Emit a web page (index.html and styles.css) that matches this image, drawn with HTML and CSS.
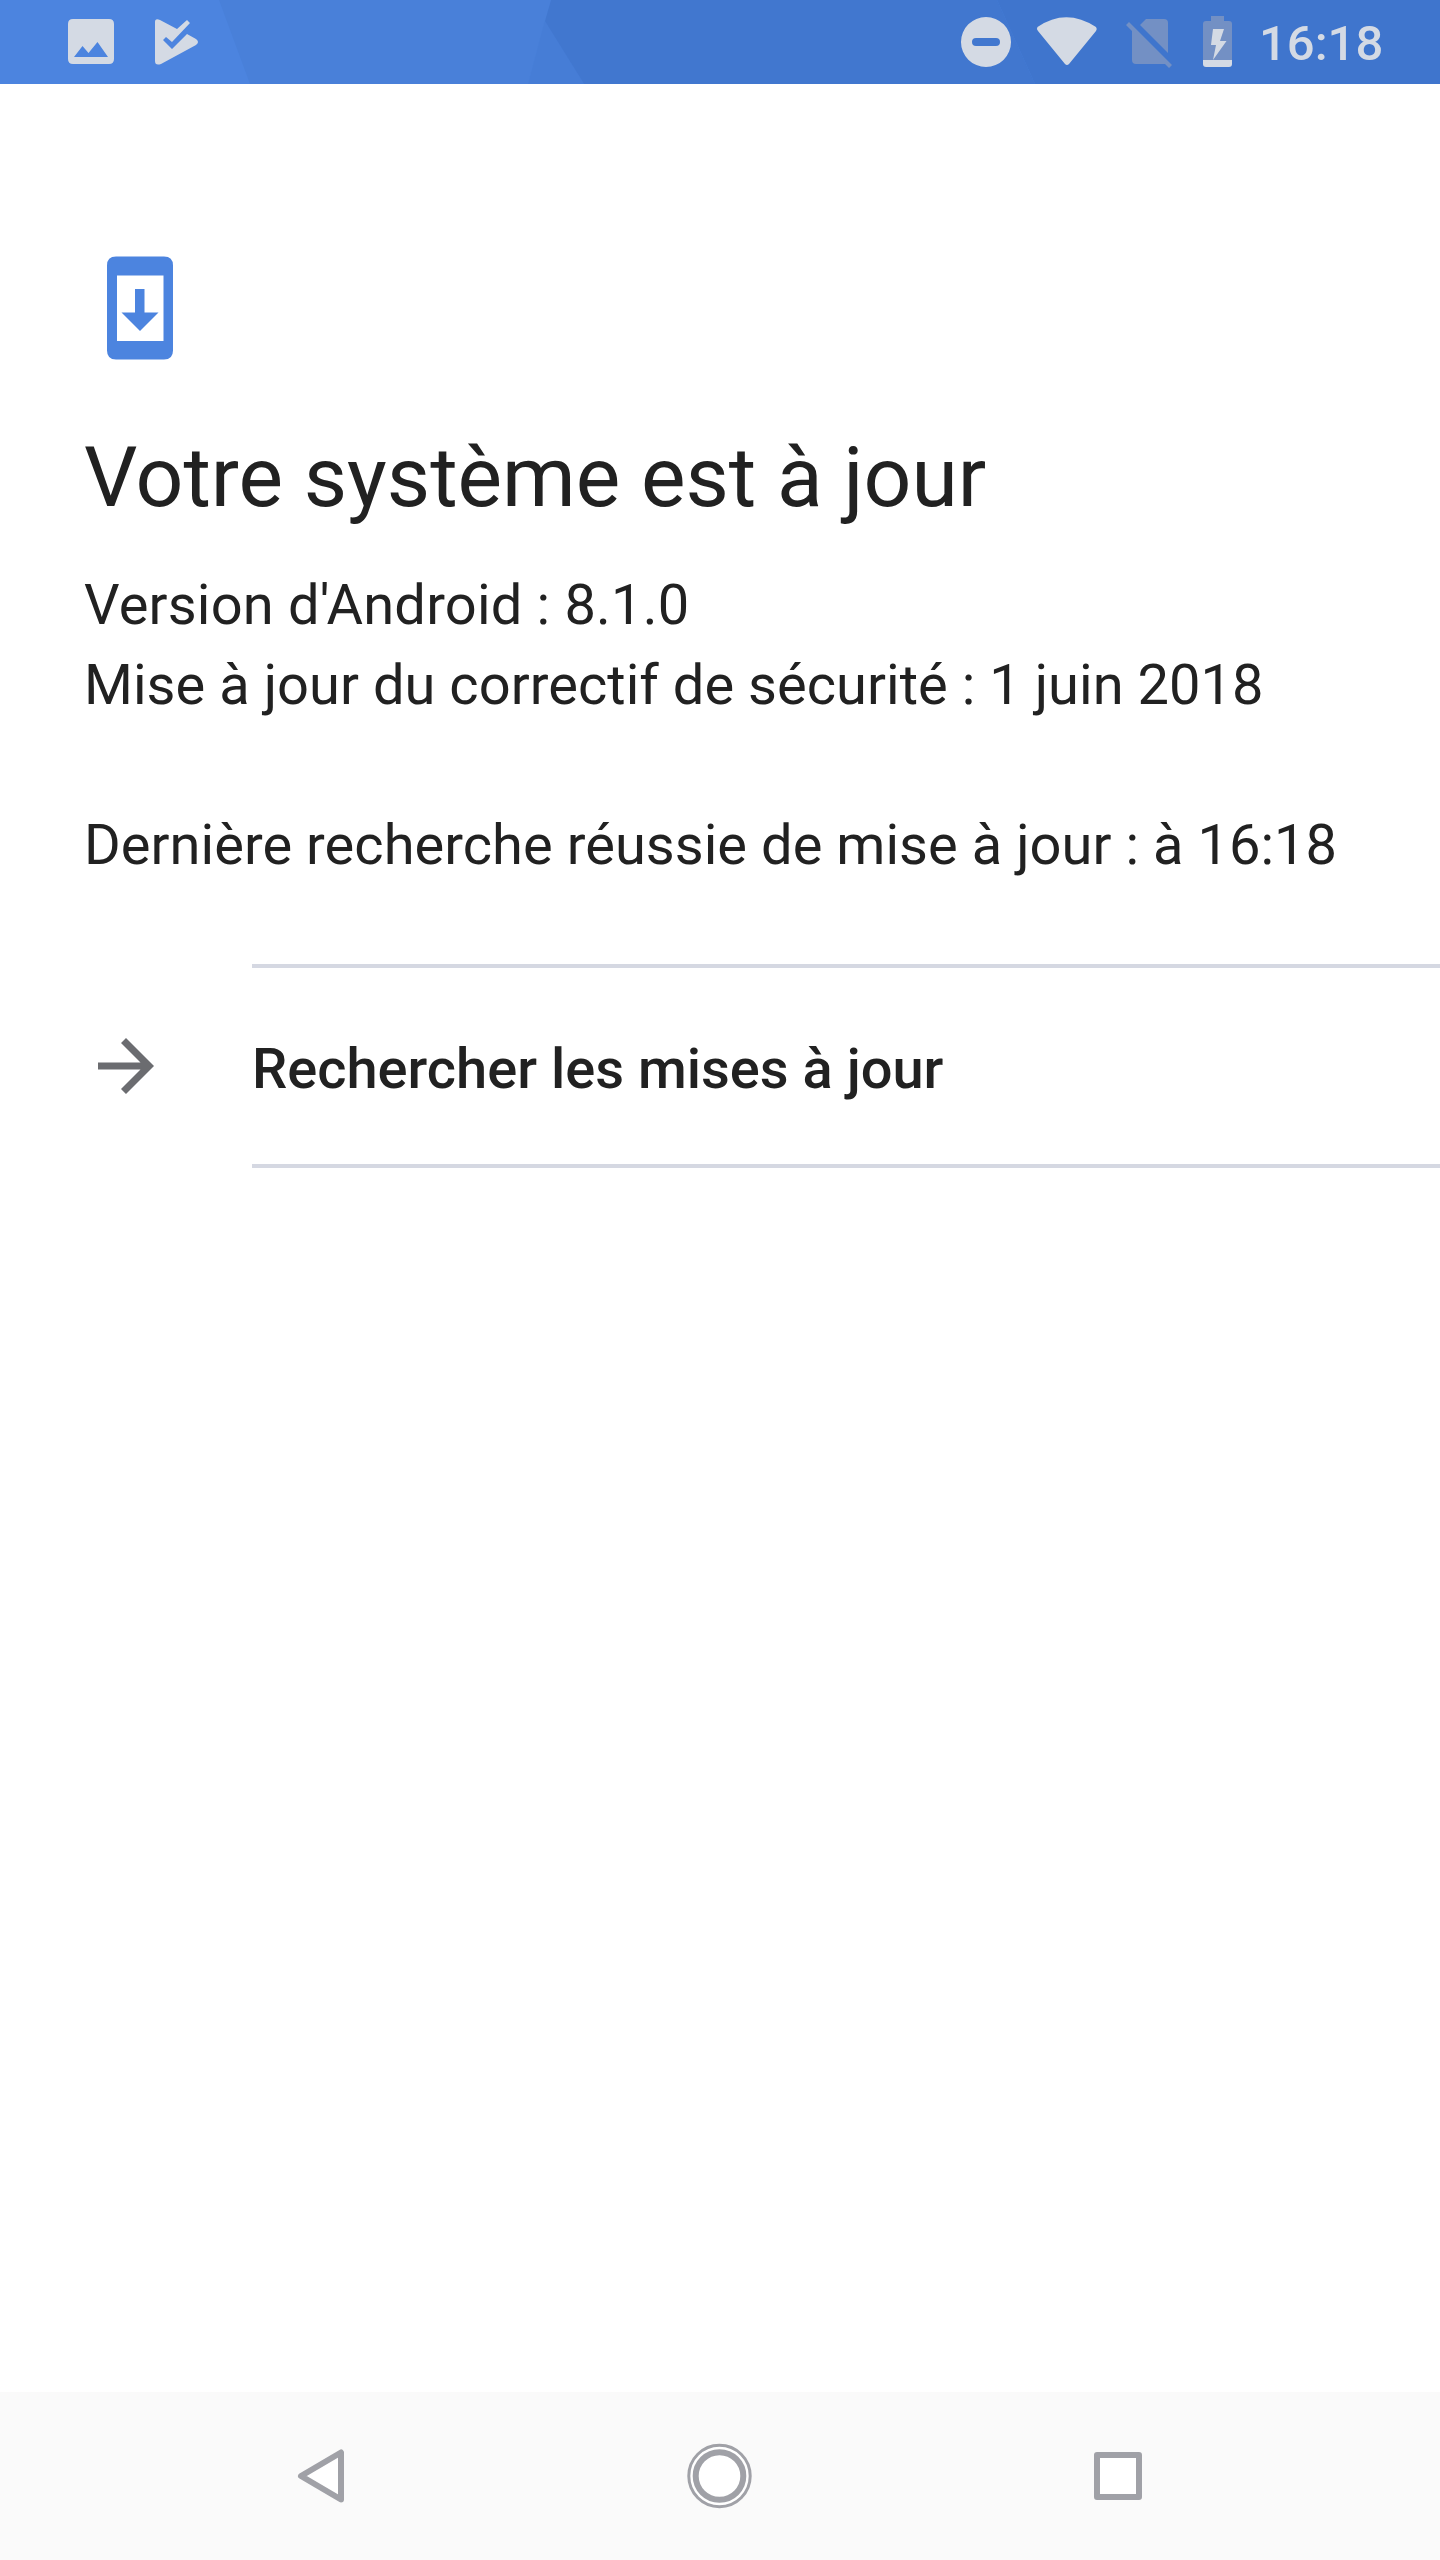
FILE: index.html
```html
<!DOCTYPE html>
<html lang="fr">
<head>
<meta charset="utf-8">
<title>Mise à jour du système</title>
<link rel="stylesheet" href="styles.css">
</head>
<body>
<div class="screen">
  <header class="status-bar">
    <svg class="status-backdrop" viewBox="0 0 1440 84" aria-hidden="true">
      <path fill="#4980d9" d="M219 0H551L528 84H250Z"/>
      <path fill="#467dd6" d="M545 20L584 84H528L545 20Z"/>
      <path fill="#4177cf" d="M551 0H997L1035 84H584L545 21Z"/>
      <path fill="#3f75cd" d="M997 0H1440V84H1035Z"/>
    </svg>
    <svg class="status-icons" viewBox="0 0 1250 84" aria-hidden="true">
      <g fill="#d4dae4">
        <path fill-rule="evenodd" d="M73 19H109Q114 19 114 24V59Q114 64 109 64H73Q68 64 68 59V24Q68 19 73 19ZM74 57H108L97.500 42L88.500 53L82.500 46Z"/>
        <path d="M155 22Q155 18 160 20L177 29L187 20L190 23L172 42L166 37L163 40L172 49L187 34L196 39Q200 42 196 45L161 64Q155 66 155 61Z"/>
        <path fill-rule="evenodd" d="M986 17a25 25 0 1 0 0 50a25 25 0 1 0 0-50ZM976 38H996a4 4 0 0 1 0 8H976a4 4 0 0 1 0-8Z"/>
        <path d="M1037.500 27Q1066 7.500 1096 27Q1097.500 29 1096 31L1069 64Q1067 66 1065 64L1038 31Q1036 29 1037.500 27Z"/>
      </g>
      <g fill="#7390c4">
        <path d="M1146 19H1164Q1168 19 1168 23V53L1140 25Z"/>
        <path d="M1129 22L1172 65L1169 68L1165 64H1136Q1132 64 1132 60V31L1126 25Z"/>
        <path d="M1211 16H1224V21H1229Q1232 21 1232 24V60H1203V24Q1203 21 1206 21H1211Z"/>
      </g>
      <g fill="#d4dae4">
        <path d="M1203 60H1232V64Q1232 67 1229 67H1206Q1203 67 1203 64Z"/>
        <path d="M1213 29H1224L1220 41H1226.500L1213 60L1216 45H1211Z"/>
      </g>
    </svg>
    <span class="clock">16:18</span>
  </header>

  <main class="content">
    <svg class="update-icon" viewBox="0 0 66 104" aria-hidden="true">
      <path fill="#4c84df" fill-rule="evenodd" d="M9 .500H57Q66 .500 66 9.500V94.500Q66 103.500 57 103.500H9Q0 103.500 0 94.500V9.500Q0 .500 9 .500ZM10 19.500V85H56.500V19.500Z"/>
      <path fill="#4c84df" d="M28 33H37.500V56.500H51.500L33 75L14.500 56.500H28Z"/>
    </svg>
    <h1 class="title">Votre système est à jour</h1>
    <p class="details"><span class="version">Version d'Android : 8.1.0</span><br>Mise à jour du correctif de sécurité : 1 juin 2018</p>
    <p class="details last-check">Dernière recherche réussie de mise à jour : à 16:18</p>
    <div class="action">
      <svg class="arrow" viewBox="0 0 56 56" aria-hidden="true">
        <path fill="#6b6c70" d="M28 0L23 5L42.500 24.500H0V31.500H42.500L23 51L28 56L56 28Z"/>
      </svg>
      <span class="action-label">Rechercher les mises à jour</span>
    </div>
  </main>

  <nav class="nav-bar">
    <svg class="nav-icons" viewBox="0 0 1440 168" aria-hidden="true">
      <g fill="#fff" stroke="#a0a1a7" stroke-linejoin="round">
        <path stroke-width="6" d="M341 60.500V107.500L301 84Z"/>
        <circle cx="719.500" cy="84" r="30.700" stroke-width="3"/>
        <circle cx="719.500" cy="84" r="23.800" stroke-width="6"/>
        <rect x="1097" y="63" width="42" height="42" stroke-width="6"/>
      </g>
    </svg>
  </nav>
</div>
</body>
</html>
```
FILE: styles.css
```css
* { box-sizing: border-box; }

body {
  margin: 0;
  background: #fff;
  font-family: Roboto, sans-serif;
  color: #212121;
}

.screen {
  display: flex;
  flex-direction: column;
  width: 1440px;
  height: 2560px;
}

.status-bar {
  display: flex;
  position: relative;
  height: 84px;
  background: #4c84df;
}

.status-backdrop {
  position: absolute;
  inset: 0;
  width: 1440px;
  height: 84px;
}

.status-icons {
  position: relative;
  width: 1250px;
  height: 84px;
}

.clock {
  position: relative;
  margin-left: 9px;
  font-size: 49px;
  font-weight: 500;
  line-height: 88px;
  color: #d4dae4;
}

.content {
  flex: 1;
  padding: 172px 0 0 84px;
}

.update-icon {
  display: block;
  width: 66px;
  height: 104px;
  margin-left: 23px;
}

.title {
  margin: 68px 0 0;
  font-size: 84px;
  font-weight: 400;
  line-height: 100px;
  letter-spacing: -0.04px;
}

.details {
  margin: 37px 0 0;
  font-size: 56px;
  line-height: 80px;
  letter-spacing: 0.04px;
}

.version { letter-spacing: 0.2px; }

.last-check { margin-top: 80px; }

.action {
  display: flex;
  align-items: center;
  height: 204px;
  margin-top: 79px;
  padding-left: 14px;
}

.arrow {
  width: 56px;
  height: 56px;
}

.action-label {
  flex: 1;
  height: 204px;
  margin-left: 98px;
  border: solid #d5d8e2;
  border-width: 4px 0;
  font-size: 56px;
  font-weight: 500;
  line-height: 202px;
}

.nav-bar {
  height: 168px;
  background: #fafafa;
}

.nav-icons {
  display: block;
  width: 1440px;
  height: 168px;
}
```
